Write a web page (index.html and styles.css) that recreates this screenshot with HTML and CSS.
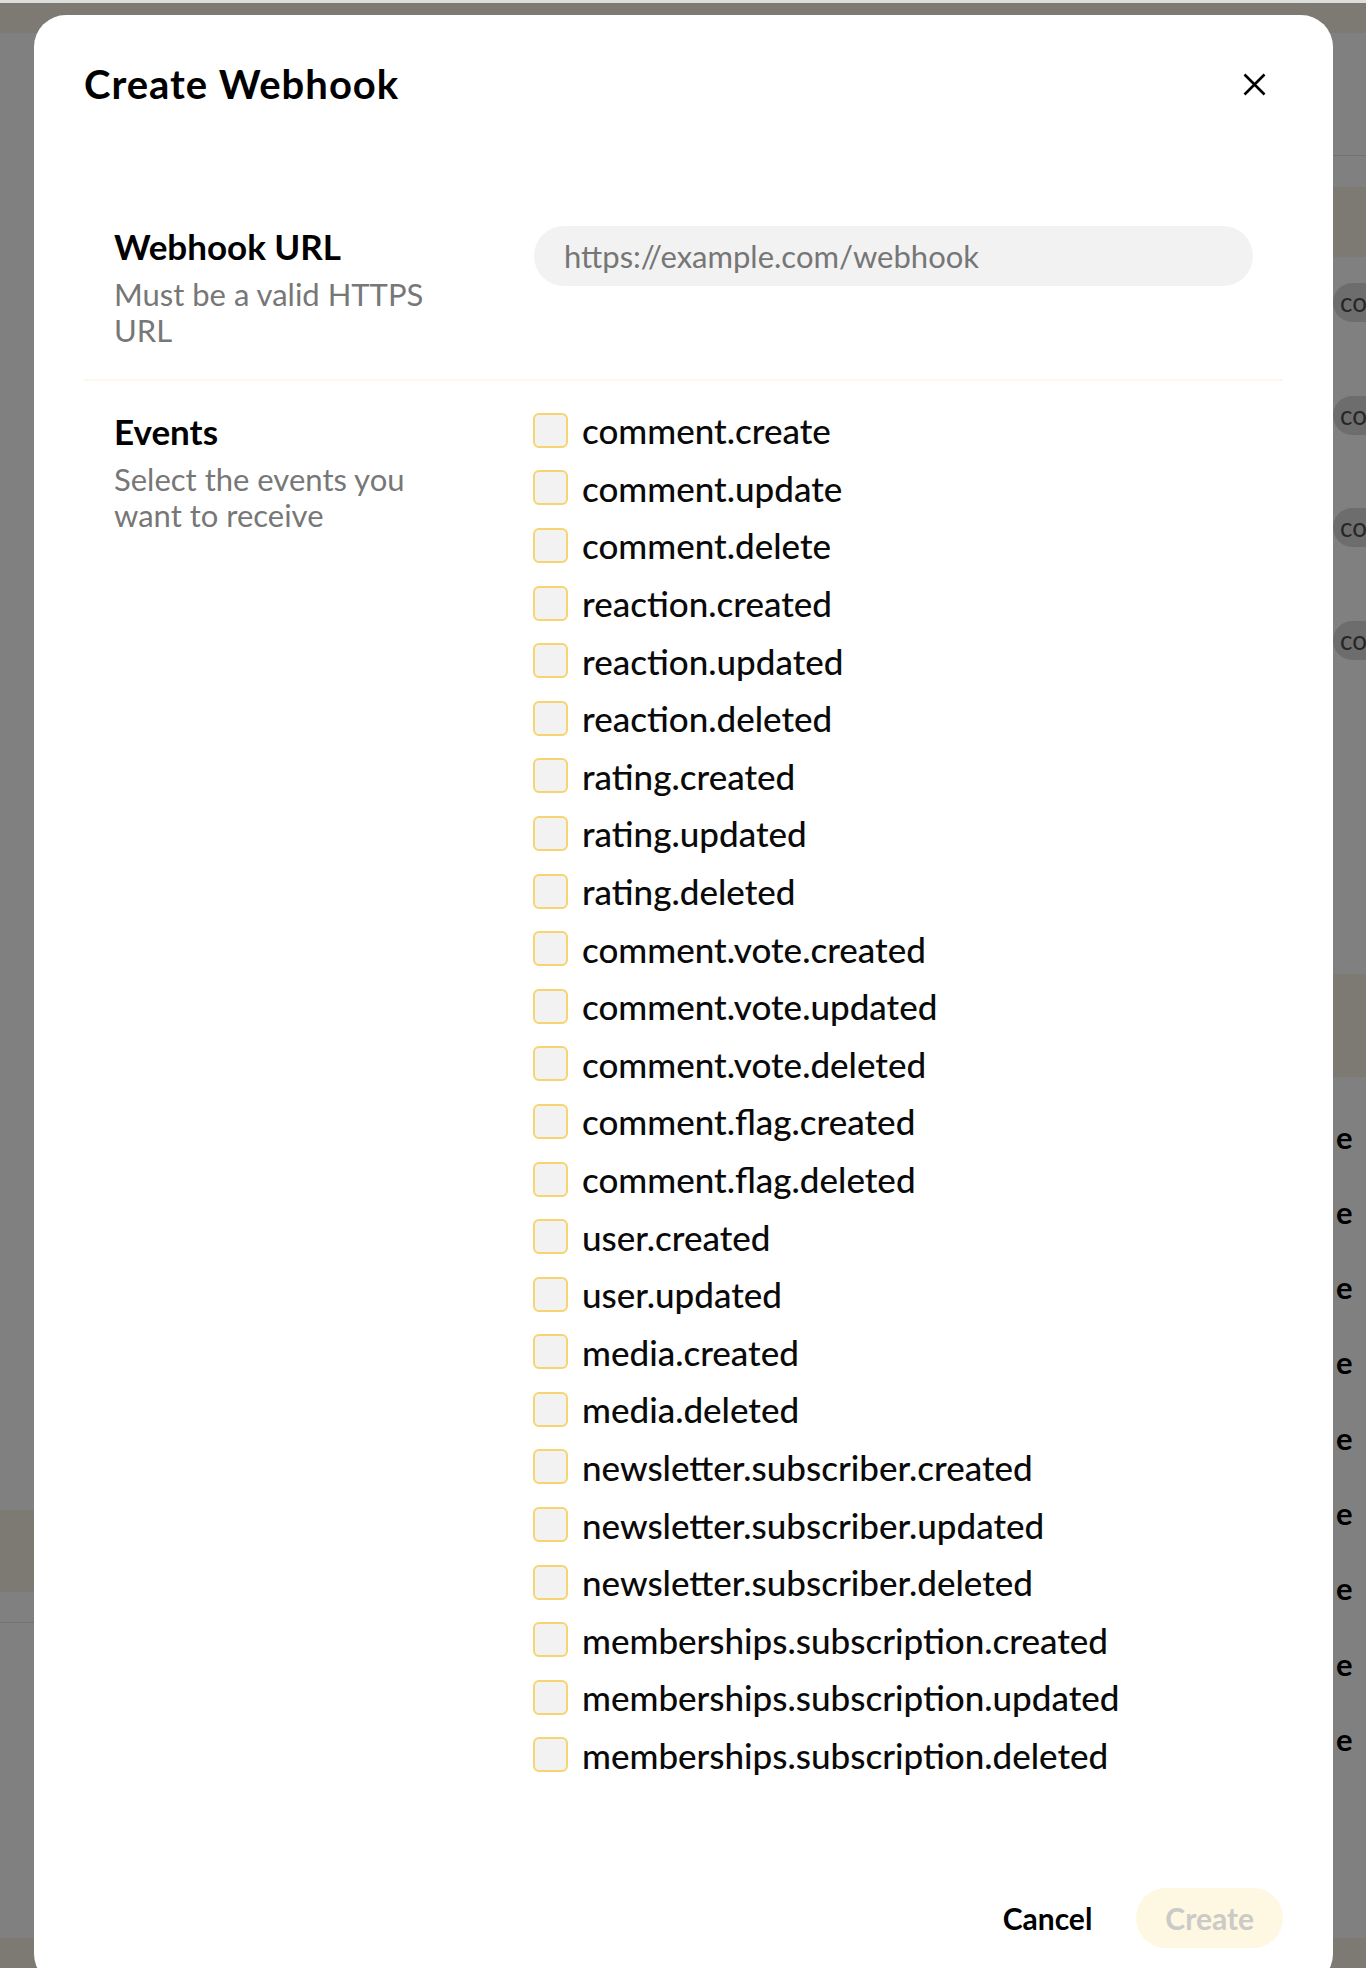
FILE: index.html
```html
<!DOCTYPE html>
<html lang="en">
<head>
    <meta charset="UTF-8">
    <meta name="viewport" content="width=device-width, initial-scale=1.0">
    <title>Create Webhook</title>
    <link rel="stylesheet" href="styles.css">
</head>
<body>
    <!-- Dimmed page behind the dialog -->
    <div class="page">
        <div class="topbar"></div>
        <div class="page-header"></div>
        <div class="page-main">
            <div class="side-left">
                <div class="band band-low"></div>
                <div class="rule rule-low"></div>
            </div>
            <div class="side-right">
                <div class="rule rule-top"></div>
                <div class="band band-top"></div>
                <div class="pill">co</div>
                <div class="pill">co</div>
                <div class="pill">co</div>
                <div class="pill">co</div>
                <div class="band band-mid"></div>
                <div class="tails">
                    <div class="tail">e</div>
                    <div class="tail">e</div>
                    <div class="tail">e</div>
                    <div class="tail">e</div>
                    <div class="tail">e</div>
                    <div class="tail">e</div>
                    <div class="tail">e</div>
                    <div class="tail">e</div>
                    <div class="tail">e</div>
                </div>
            </div>
        </div>
        <div class="page-footer"></div>
    </div>

    <div class="modal">
        <div class="modal-header">
            <h2 class="modal-title">Create Webhook</h2>
            <button class="close-btn" type="button" aria-label="Close">
                <svg width="23" height="23" viewBox="0 0 23 23">
                    <path d="M1.5 1.5 L21.5 21.5 M21.5 1.5 L1.5 21.5" stroke="#000" stroke-width="2.6" fill="none"/>
                </svg>
            </button>
        </div>

        <form class="webhook-form">
            <div class="section section-url">
                <div class="section-info">
                    <div class="section-label">Webhook URL</div>
                    <div class="section-desc">Must be a valid HTTPS URL</div>
                </div>
                <div class="section-field">
                    <input class="url-input" type="text" name="url" placeholder="https://example.com/webhook">
                </div>
            </div>

            <div class="section section-events">
                <div class="section-info">
                    <div class="section-label">Events</div>
                    <div class="section-desc">Select the events you want to receive</div>
                </div>
                <div class="event-list">
                    <label class="event"><input type="checkbox" name="events" value="comment.create">comment.create</label>
                    <label class="event"><input type="checkbox" name="events" value="comment.update">comment.update</label>
                    <label class="event"><input type="checkbox" name="events" value="comment.delete">comment.delete</label>
                    <label class="event"><input type="checkbox" name="events" value="reaction.created">reaction.created</label>
                    <label class="event"><input type="checkbox" name="events" value="reaction.updated">reaction.updated</label>
                    <label class="event"><input type="checkbox" name="events" value="reaction.deleted">reaction.deleted</label>
                    <label class="event"><input type="checkbox" name="events" value="rating.created">rating.created</label>
                    <label class="event"><input type="checkbox" name="events" value="rating.updated">rating.updated</label>
                    <label class="event"><input type="checkbox" name="events" value="rating.deleted">rating.deleted</label>
                    <label class="event"><input type="checkbox" name="events" value="comment.vote.created">comment.vote.created</label>
                    <label class="event"><input type="checkbox" name="events" value="comment.vote.updated">comment.vote.updated</label>
                    <label class="event"><input type="checkbox" name="events" value="comment.vote.deleted">comment.vote.deleted</label>
                    <label class="event"><input type="checkbox" name="events" value="comment.flag.created">comment.flag.created</label>
                    <label class="event"><input type="checkbox" name="events" value="comment.flag.deleted">comment.flag.deleted</label>
                    <label class="event"><input type="checkbox" name="events" value="user.created">user.created</label>
                    <label class="event"><input type="checkbox" name="events" value="user.updated">user.updated</label>
                    <label class="event"><input type="checkbox" name="events" value="media.created">media.created</label>
                    <label class="event"><input type="checkbox" name="events" value="media.deleted">media.deleted</label>
                    <label class="event"><input type="checkbox" name="events" value="newsletter.subscriber.created">newsletter.subscriber.created</label>
                    <label class="event"><input type="checkbox" name="events" value="newsletter.subscriber.updated">newsletter.subscriber.updated</label>
                    <label class="event"><input type="checkbox" name="events" value="newsletter.subscriber.deleted">newsletter.subscriber.deleted</label>
                    <label class="event"><input type="checkbox" name="events" value="memberships.subscription.created">memberships.subscription.created</label>
                    <label class="event"><input type="checkbox" name="events" value="memberships.subscription.updated">memberships.subscription.updated</label>
                    <label class="event"><input type="checkbox" name="events" value="memberships.subscription.deleted">memberships.subscription.deleted</label>
                </div>
            </div>

            <div class="modal-footer">
                <button class="btn-cancel" type="button">Cancel</button>
                <button class="btn-create" type="submit" disabled>Create</button>
            </div>
        </form>
    </div>
</body>
</html>
```

FILE: styles.css
```css
html, body {
    height: 1968px;
}
body {
    margin: 0;
    overflow: hidden;
    background-color: #808080;
    font-family: "Lato", "Noto Sans", sans-serif;
}

/* dimmed page */
.page {
    height: 1968px;
    display: flex;
    flex-direction: column;
}
.topbar {
    height: 3px;
    background: #dcdedb;
}
.page-header {
    height: 30px;
    background: #7d7a73;
}
.page-main {
    flex: 1;
    display: flex;
    justify-content: space-between;
}
.page-footer {
    height: 30px;
    background: #7d7a73;
}
.side-left {
    width: 34px;
}
.side-right {
    width: 33px;
    overflow: hidden;
}
.band {
    background: #7d7a73;
}
.rule {
    height: 1px;
    background: #727272;
}
.band-low {
    margin-top: 1477px;
    height: 82px;
}
.rule-low {
    margin-top: 30px;
}
.rule-top {
    margin-top: 122px;
}
.band-top {
    margin-top: 31px;
    height: 70px;
}
.pill {
    margin-top: 73.5px;
    height: 39px;
    line-height: 39px;
    padding-left: 7px;
    border-radius: 20px 0 0 20px;
    background: #6d6d6d;
    color: #262626;
    font-size: 26px;
}
.band-top + .pill {
    margin-top: 26px;
}
.band-mid {
    margin-top: 314px;
    height: 103px;
}
.tails {
    margin-top: 23px;
}
.tail {
    height: 75.3px;
    line-height: 75.3px;
    padding-left: 3px;
    font-size: 31px;
    font-weight: 700;
    color: #000;
}

/* dialog */
.modal {
    position: absolute;
    top: 15px;
    left: 34px;
    width: 1299px;
    box-sizing: border-box;
    padding: 40px 50px 38px;
    background: #fff;
    border-radius: 32px;
}
.modal-header {
    display: flex;
    justify-content: space-between;
    align-items: center;
    height: 58px;
}
.modal-title {
    margin: 0;
    font-size: 40px;
    font-weight: 700;
    letter-spacing: 1px;
    line-height: 58px;
    color: #000;
}
.close-btn {
    width: 58px;
    height: 58px;
    padding: 0;
    border: none;
    background: none;
    display: flex;
    align-items: center;
    justify-content: center;
    cursor: pointer;
}
.section {
    display: grid;
    grid-template-columns: 390px 1fr;
    column-gap: 30px;
    padding: 0 30px;
}
.section-url {
    padding-top: 113px;
    padding-bottom: 31px;
    border-bottom: 2px solid #fdf7e7;
}
.section-events {
    padding-top: 29.8px;
}
.section-label {
    margin-top: -3px;
    font-size: 35px;
    font-weight: 700;
    line-height: 46px;
    color: #000;
}
.section-desc {
    max-width: 330px;
    margin-top: 7px;
    font-size: 31px;
    line-height: 36px;
    color: #777;
}
.url-input {
    width: 100%;
    height: 60px;
    box-sizing: border-box;
    padding: 0 30px;
    border: none;
    border-radius: 30px;
    background: #f2f2f2;
    font-family: inherit;
    font-size: 31px;
    color: #222;
    outline: none;
}
.url-input::placeholder {
    color: #767676;
}
.event-list {
    display: flex;
    flex-direction: column;
    gap: 11.6px;
    margin-top: -3.5px;
}
.event {
    display: flex;
    align-items: center;
    gap: 14px;
    font-size: 35px;
    font-weight: 500;
    line-height: 46px;
    color: #0a0a0a;
}
.event input {
    appearance: none;
    width: 35px;
    height: 35px;
    margin: 0 0 0 -1px;
    box-sizing: border-box;
    border: 2px solid #f6d470;
    border-radius: 6px;
    background: #f2f2f2;
    flex-shrink: 0;
}
.modal-footer {
    display: flex;
    justify-content: flex-end;
    gap: 16px;
    margin-top: 110px;
}
.modal-footer button {
    height: 60px;
    border: none;
    border-radius: 30px;
    font-family: inherit;
    font-size: 30px;
    font-weight: 700;
}
.btn-cancel {
    padding: 0 28px;
    background: none;
    color: #000;
    cursor: pointer;
}
.btn-create {
    padding: 0 29px;
    background: #fef7e2;
    color: #cacac6;
}
```
